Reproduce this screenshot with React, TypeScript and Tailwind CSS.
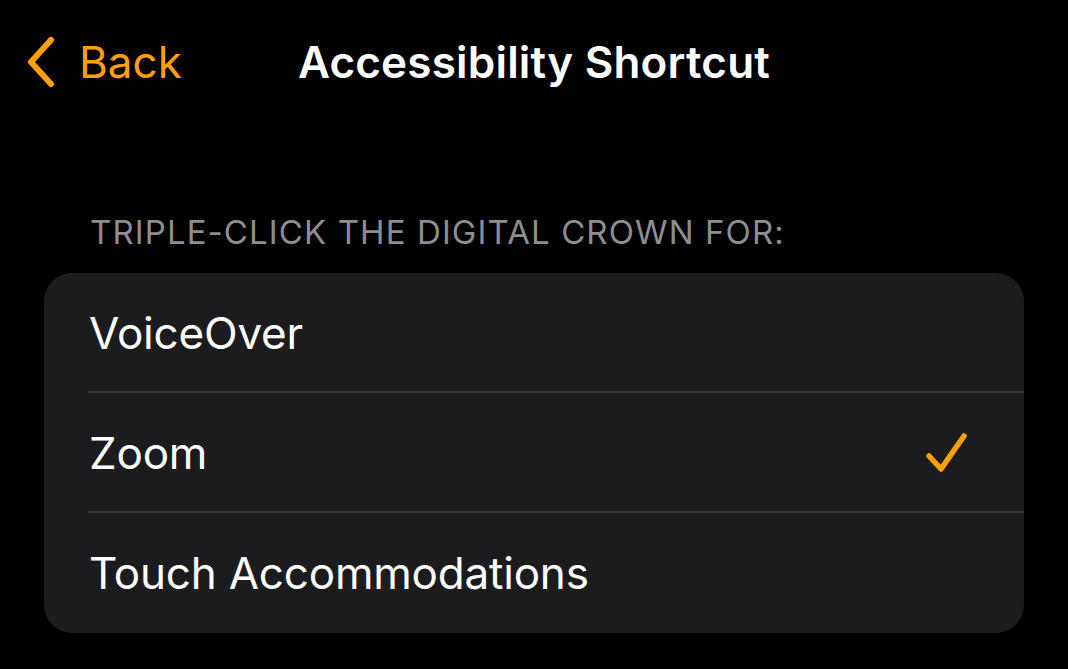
import React from "react";

const font = { fontFamily: "Inter, 'Noto Sans', sans-serif" };

function Row({ label, checked, last }: { label: string; checked?: boolean; last?: boolean }) {
  return (
    <div className="relative flex h-[120px] items-center pl-[45px] pr-[54px]">
      <span className="flex-1 text-[44px] text-white tracking-[-0.2px]">{label}</span>
      {checked && (
        <svg width="46" height="46" viewBox="0 0 46 46" fill="none">
          <path d="M5 26 L17 39 L40 6" stroke="#ff9f0a" strokeWidth="5.5" strokeLinecap="round" strokeLinejoin="round" />
        </svg>
      )}
      {!last && <div className="absolute bottom-0 left-[44px] right-0 h-[2px] bg-[#353538]" />}
    </div>
  );
}

export default function App() {
  return (
    <div className="h-[669px] w-[1068px] bg-black overflow-hidden" style={font}>
      <div className="relative flex h-[124px] items-center">
        <div className="flex items-center pl-[25px] text-[#ff9f0a]">
          <svg width="32" height="52" viewBox="0 0 32 52" fill="none">
            <path d="M26 4 L6 26 L26 48" stroke="#ff9f0a" strokeWidth="6" strokeLinecap="round" strokeLinejoin="round" />
          </svg>
          <span className="ml-[22px] text-[44px] leading-none">Back</span>
        </div>
        <div className="absolute inset-x-0 text-center text-[44px] font-semibold text-white leading-none tracking-[0.2px]">
          Accessibility Shortcut
        </div>
      </div>
      <div className="pl-[90px] pt-[92px] text-[33px] leading-none tracking-[1.1px] text-[#8d8d93]">
        TRIPLE-CLICK THE DIGITAL CROWN FOR:
      </div>
      <div className="mx-[44px] mt-[24px] overflow-hidden rounded-[28px] bg-[#1c1c1e]">
        <Row label="VoiceOver" />
        <Row label="Zoom" checked />
        <Row label="Touch Accommodations" last />
      </div>
    </div>
  );
}
